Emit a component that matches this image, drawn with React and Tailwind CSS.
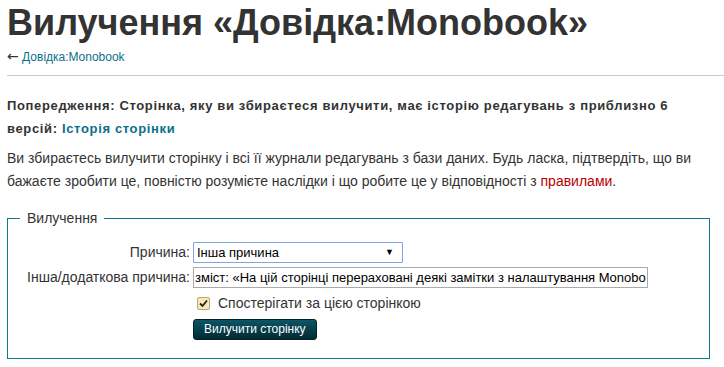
import React from 'react';

const font = { fontFamily: '"Liberation Sans", Arial, sans-serif' };

const App = () => {
    return (
        <div className="bg-white w-[724px] h-[367px] overflow-hidden pl-[7px] text-[#333]" style={font}>
            <h1 className="text-[36px] font-bold leading-[40px] pt-[3px] m-0 whitespace-nowrap">
                Вилучення «Довідка:Monobook»
            </h1>
            <div className="text-[12px] leading-[16px] mt-[5px]">
                <span className="text-[14px]" style={{ fontFamily: '"DejaVu Sans", sans-serif' }}>←</span>{' '}
                <a className="text-[#0b7089]">Довідка:Monobook</a>
            </div>
            <div className="h-px bg-[#cccccc] mt-[10px]" />

            <p className="text-[13px] font-bold leading-[23px] mt-[18px] tracking-[0.65px]">
                Попередження: Сторінка, яку ви збираєтеся вилучити, має історію редагувань з приблизно 6
                <br />
                версій: <a className="text-[#0b7089]">Історія сторінки</a>
            </p>
            <p className="text-[14px] leading-[23px] mt-[7px]">
                Ви збираєтесь вилучити сторінку і всі її журнали редагувань з бази даних. Будь ласка, підтвердіть, що ви
                <br />
                бажаєте зробити це, повністю розумієте наслідки і що робите це у відповідності з{' '}
                <a className="text-[#ba0000]">правилами</a>.
            </p>

            <fieldset className="border border-[#0b7a8d] w-[703px] h-[151px] mt-[15px] px-[14px] pb-0">
                <legend className="text-[14px] px-[7px] ml-[-2px]">Вилучення</legend>
                <div className="flex flex-col text-[14px] mt-[13px]">
                    <div className="flex items-center h-[21px]">
                        <span className="w-[171px] text-right pr-[3px]">Причина:</span>
                        <div className="w-[210px] h-[21px] border border-[#7ea6e6] rounded-[1px] flex items-center justify-between pl-[3px] pr-[8px] text-[13px] text-black">
                            <span>Інша причина</span>
                            <span className="text-[9px]">▼</span>
                        </div>
                    </div>
                    <div className="flex items-center h-[21px] mt-[4px]">
                        <span className="w-[171px] text-right pr-[3px] whitespace-nowrap">Інша/додаткова причина:</span>
                        <input
                            readOnly
                            defaultValue="зміст: «На цій сторінці перераховані деякі замітки з налаштування Monobook»"
                            className="w-[455px] h-[21px] border border-[#aaaaaa] px-[1px] text-[13px] text-black outline-none"
                            style={font}
                        />
                    </div>
                    <div className="flex items-center h-[20px] mt-[5px] pl-[175px]">
                        <span className="w-[13px] h-[13px] border border-[#b8a877] bg-[#f8e8b8] rounded-[2px] flex items-center justify-center">
                            <svg width="9" height="9" viewBox="0 0 9 9">
                                <path d="M1 4.5 L3.5 7 L8 1.5" stroke="#222" strokeWidth="1.8" fill="none" />
                            </svg>
                        </span>
                        <span className="ml-[8px]">Спостерігати за цією сторінкою</span>
                    </div>
                    <div className="pl-[171px] mt-[5px]">
                        <button className="h-[21px] px-[10px] rounded-[3px] text-white text-[12px] bg-gradient-to-b from-[#0d5566] to-[#022a33] border border-[#01222a]" style={font}>
                            Вилучити сторінку
                        </button>
                    </div>
                </div>
            </fieldset>
        </div>
    );
};

export default App;
